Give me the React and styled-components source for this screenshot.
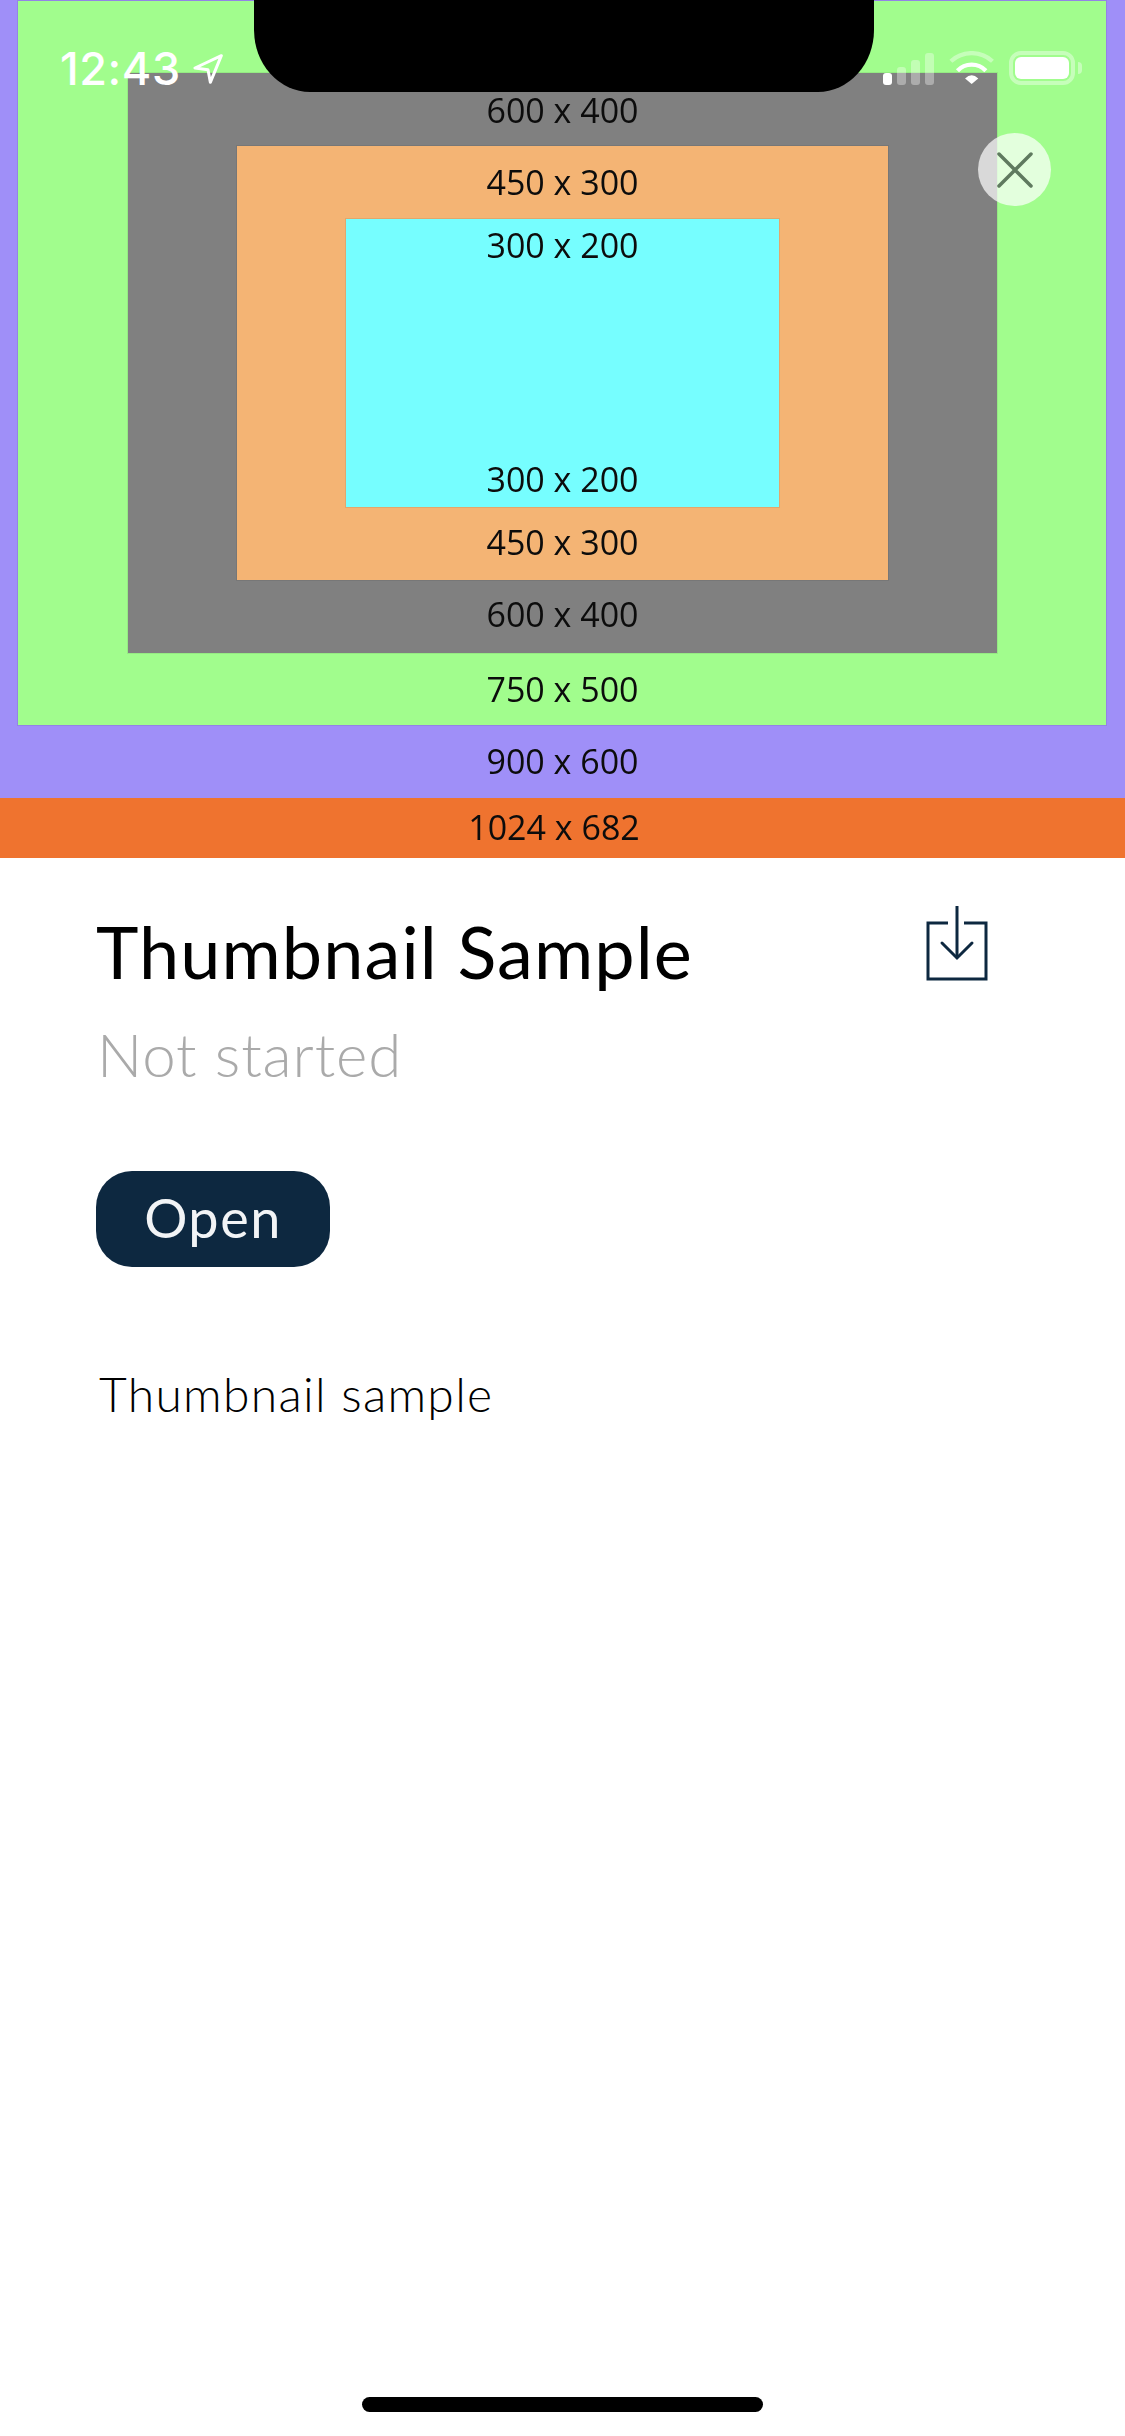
import React from 'react';
import styled, { createGlobalStyle } from 'styled-components';

const Global = createGlobalStyle`
	html, body { margin: 0; padding: 0; background: #fff; }
	body { font-family: Lato, "Open Sans", sans-serif; }
`;

const Page = styled.div`
	display: flex;
	flex-direction: column;
	min-height: 2436px;
	position: relative;
	width: 1125px;
	overflow: hidden;
`;

const Hero = styled.div`
	background: #9f8ff8;
	box-sizing: border-box;
	display: flex;
	flex-direction: column;
	height: 858px;
	padding-top: 1px;
`;

const Frame = styled.div`
	box-shadow: 0 0 0 1px rgba(0, 0, 0, 0.07);
	box-sizing: border-box;
	display: flex;
	flex-direction: column;
	justify-content: space-between;
`;

const GreenFrame = styled(Frame)`
	background: #a1fd8d;
	height: 724px;
	margin: 0 19px 0 18px;
	padding: 72px 109px 0 110px;
`;

const GrayFrame = styled(Frame)`
	background: #808080;
	height: 580px;
`;

const TanFrame = styled(Frame)`
	background: #f4b474;
	height: 434px;
	margin: 0 109px;
`;

const CyanFrame = styled(Frame)`
	background: #76feff;
	height: 288px;
	margin: 0 109px;
`;

const Label = styled.div`
	align-items: center;
	box-sizing: border-box;
	color: #0c0c0c;
	display: flex;
	filter: blur(0.3px);
	flex-shrink: 0;
	font-family: "Open Sans", sans-serif;
	font-size: 34px;
	height: ${props => props.$height}px;
	justify-content: center;
	padding-bottom: ${props => props.$lift || 0}px;
`;

const Band = styled(Label)`
	background: #ef732f;
	padding-right: 17px;
`;

const StatusBar = styled.div`
	align-items: flex-start;
	display: flex;
	justify-content: space-between;
	left: 0;
	padding: 51px 43px 0 60px;
	position: absolute;
	right: 0;
	top: 0;
`;

const Clock = styled.div`
	align-items: center;
	display: flex;
	gap: 12px;
`;

const Time = styled.span`
	color: #fff;
	font-family: Inter, sans-serif;
	font-size: 45px;
	font-weight: 500;
	letter-spacing: 0.6px;
	line-height: 36px;
`;

const Indicators = styled.div`
	align-items: flex-start;
	display: flex;
	gap: 15px;
`;

const Signal = styled.div`
	align-items: flex-end;
	display: flex;
	gap: 5px;
	height: 32px;
	margin-top: 2px;
`;

const SignalBar = styled.i`
	background: rgba(255, 255, 255, ${props => (props.$on ? 1 : 0.35)});
	border-radius: 3px;
	display: block;
	height: ${props => props.$height}px;
	width: 9px;
`;

const Battery = styled.div`
	align-items: center;
	display: flex;
	gap: 3px;
`;

const BatteryBody = styled.div`
	border: 4px solid rgba(255, 255, 255, 0.4);
	border-radius: 12px;
	box-sizing: border-box;
	height: 34px;
	padding: 2px;
	width: 66px;
`;

const BatteryFill = styled.div`
	background: #fff;
	border-radius: 6px;
	height: 100%;
`;

const BatteryNub = styled.div`
	background: rgba(255, 255, 255, 0.4);
	border-radius: 0 6px 6px 0;
	height: 12px;
	width: 4px;
`;

const Notch = styled.div`
	background: #000;
	border-radius: 0 0 56px 56px / 0 0 62px 62px;
	height: 92px;
	left: 254px;
	position: absolute;
	top: 0;
	width: 620px;
`;

const CloseButton = styled.button`
	align-items: center;
	background: rgba(255, 255, 255, 0.7);
	border: 0;
	border-radius: 50%;
	display: flex;
	height: 73px;
	justify-content: center;
	left: 978px;
	padding: 0;
	position: absolute;
	top: 133px;
	width: 73px;
`;

const Content = styled.div`
	display: flex;
	flex-direction: column;
	padding: 50px 0 0 96px;
`;

const Header = styled.div`
	align-items: flex-start;
	display: flex;
	justify-content: space-between;
	padding-right: 136px;
`;

const Title = styled.h1`
	color: #000;
	font-size: 72px;
	font-weight: 400;
	letter-spacing: 1.1px;
	line-height: 86px;
	margin: 0;
`;

const SaveIcon = styled.svg`
	margin-top: -2px;
`;

const Status = styled.div`
	color: #aaa;
	font-size: 60px;
	font-weight: 300;
	letter-spacing: 0.9px;
	line-height: 72px;
	margin-top: 24px;
	padding-left: 1px;
`;

const OpenRow = styled.div`
	display: flex;
	margin-top: 81px;
`;

const OpenButton = styled.button`
	background: #0d2840;
	border: 0;
	border-radius: 36px;
	color: #f2f4f6;
	font-family: inherit;
	font-size: 54px;
	font-weight: 400;
	height: 96px;
	letter-spacing: 1.5px;
	padding: 0 0 4px;
	width: 234px;
`;

const Description = styled.div`
	color: #000;
	font-size: 48px;
	font-weight: 300;
	letter-spacing: 1.3px;
	line-height: 56px;
	margin-top: 99px;
	padding-left: 3px;
`;

const HomeIndicator = styled.div`
	background: #000;
	border-radius: 8px;
	height: 15px;
	margin: auto 0 24px 362px;
	width: 401px;
`;

const LocationArrow = () => (
	<svg width='30' height='30' viewBox='0 0 90 90' fill='none'>
		<path d='M85 5L6 42L45 47L52 85Z' stroke='#fff' strokeWidth='9' strokeLinejoin='round' />
	</svg>
);

const Wifi = () => (
	<svg width='45' height='33' viewBox='0 0 135 100' fill='none'>
		<path d='M5 31A93 93 0 0 1 131 31' stroke='#fff' strokeOpacity='0.4' strokeWidth='13' />
		<path d='M25 60A59 59 0 0 1 111 60' stroke='#fff' strokeWidth='13' />
		<path d='M48 83Q68 64 88 83L68 100Z' fill='#fff' />
	</svg>
);

const CloseIcon = () => (
	<svg width='36' height='36' viewBox='0 0 36 36' fill='none'>
		<path d='M2 2L34 34M34 2L2 34' stroke='#5f7a5f' strokeWidth='3.5' strokeLinecap='round' />
	</svg>
);

const DownloadIcon = () => (
	<SaveIcon width='64' height='76' viewBox='0 0 64 76' fill='none' stroke='#0d2840' strokeWidth='3'>
		<path d='M23 17H3V73H61V17H39' />
		<path d='M32 0V52' />
		<path d='M17 37L32 52L47 37' strokeLinecap='round' />
	</SaveIcon>
);

const App = () => (
	<Page>
		<Global />
		<Hero>
			<GreenFrame>
				<GrayFrame>
					<Label $height={73}>600 x 400</Label>
					<TanFrame>
						<Label $height={73} $lift={2}>450 x 300</Label>
						<CyanFrame>
							<Label $height={52}>300 x 200</Label>
							<Label $height={56}>300 x 200</Label>
						</CyanFrame>
						<Label $height={73} $lift={3}>450 x 300</Label>
					</TanFrame>
					<Label $height={73} $lift={6}>600 x 400</Label>
				</GrayFrame>
				<Label $height={72}>750 x 500</Label>
			</GreenFrame>
			<Label $height={73} $lift={2}>900 x 600</Label>
			<Band $height={60} $lift={2}>1024 x 682</Band>
		</Hero>
		<Notch />
		<StatusBar>
			<Clock>
				<Time>12:43</Time>
				<LocationArrow />
			</Clock>
			<Indicators>
				<Signal>
					<SignalBar $on $height={12} />
					<SignalBar $height={18} />
					<SignalBar $height={25} />
					<SignalBar $height={32} />
				</Signal>
				<Wifi />
				<Battery>
					<BatteryBody>
						<BatteryFill />
					</BatteryBody>
					<BatteryNub />
				</Battery>
			</Indicators>
		</StatusBar>
		<CloseButton>
			<CloseIcon />
		</CloseButton>
		<Content>
			<Header>
				<Title>Thumbnail Sample</Title>
				<DownloadIcon />
			</Header>
			<Status>Not started</Status>
			<OpenRow>
				<OpenButton>Open</OpenButton>
			</OpenRow>
			<Description>Thumbnail sample</Description>
		</Content>
		<HomeIndicator />
	</Page>
);

export default App;
